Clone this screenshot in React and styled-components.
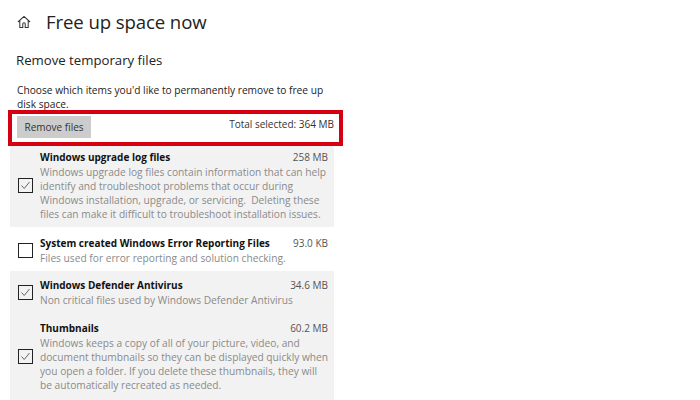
import React from "react";
import styled, { createGlobalStyle } from "styled-components";

const Global = createGlobalStyle`
  html, body { margin: 0; padding: 0; background: #fff; overflow: hidden; }
  body { font-family: "Open Sans", "Noto Sans", "Liberation Sans", sans-serif; color: #1a1a1a; }
`;
const Page = styled.div`
  width: 700px; height: 400px; overflow: hidden; box-sizing: border-box;
  padding: 9px 0 0 10px; display: flex; flex-direction: column;
  & > * { flex: none; }
`;
const Header = styled.header`
  display: flex; align-items: center; gap: 15px; height: 26px; padding-left: 7px;
`;
const Title = styled.h1`
  margin: 0; font-size: 18.6px; font-weight: 400; line-height: 26px; color: #222; letter-spacing: -0.1px;
`;
const Subhead = styled.h2`
  margin: 15px 0 0 6px; font-size: 13.2px; font-weight: 400; line-height: 20px; color: #222;
`;
const Intro = styled.p`
  margin: 13px 0 0 7px; width: 320px; font-size: 10.2px; line-height: 14px; color: #222; height: 28px;
`;
const Highlight = styled.div`
  box-sizing: border-box; width: 335px; height: 36px; margin-left: -2px; margin-top: -1px;
  border: 4px solid #d40012; display: flex; justify-content: space-between; align-items: flex-start;
  padding: 2px 5px 0 5px;
`;
const RemoveButton = styled.button`
  width: 74px; height: 22px; border: 0; background: #cccccc; font: inherit; font-size: 10px; color: #333; padding: 0;
`;
const Total = styled.span`
  font-size: 10px; line-height: 14px; margin-top: 1px; color: #333;
`;
const List = styled.div`
  width: 324px; display: flex; flex-direction: column;
`;
const Row = styled.div`
  display: flex; align-items: center; gap: 7px; padding: ${p => p.$pad};
  background: ${p => (p.$selected ? "#f2f2f2" : "#fff")};
`;
const Box = styled.span`
  flex: none; box-sizing: border-box; width: 15px; height: 15px; border: 1.5px solid #222;
  display: flex; align-items: center; justify-content: center;
`;
const Body = styled.div`
  flex: 1; min-width: 0;
`;
const TitleLine = styled.div`
  display: flex; justify-content: space-between; font-size: 10px; line-height: 14px; color: #555; margin-bottom: 1px; white-space: nowrap;
`;
const Name = styled.strong`
  font-weight: 700; color: #111;
`;
const Desc = styled.div`
  font-size: 10.2px; line-height: 14px; color: #8a8a8a; white-space: pre;
`;
const Home = () => (
  <svg width="14" height="14" viewBox="0 0 15 15" fill="none" stroke="#333" strokeWidth="1.1">
    <path d="M1 7.5 7.5 1.5 14 7.5M3 6v7.5h3.2V9.5a1.3 1.3 0 0 1 2.6 0v4H12V6" />
  </svg>
);
const Check = () => (
  <svg width="11" height="11" viewBox="0 0 11 11" fill="none" stroke="#666" strokeWidth="1">
    <path d="M1.5 5.5 4.2 8.5 9.5 2" />
  </svg>
);
const items = [
  { name: "Windows upgrade log files", size: "258 MB", on: true, pad: "4px 6px 6px 8px", desc: ["Windows upgrade log files contain information that can help", "identify and troubleshoot problems that occur during", "Windows installation, upgrade, or servicing.  Deleting these", "files can make it difficult to troubleshoot installation issues."] },
  { name: "System created Windows Error Reporting Files", size: "93.0 KB", on: false, pad: "9px 6px 6px 8px", desc: ["Files used for error reporting and solution checking."] },
  { name: "Windows Defender Antivirus", size: "34.6 MB", on: true, pad: "7px 6px 7px 8px", desc: ["Non critical files used by Windows Defender Antivirus"] },
  { name: "Thumbnails", size: "60.2 MB", on: true, pad: "7px 6px 8px 8px", desc: ["Windows keeps a copy of all of your picture, video, and", "document thumbnails so they can be displayed quickly when", "you open a folder. If you delete these thumbnails, they will", "be automatically recreated as needed."] },
];
export default function App() {
  return (
    <Page>
      <Global />
      <Header><Home /><Title>Free up space now</Title></Header>
      <Subhead>Remove temporary files</Subhead>
      <Intro>Choose which items you'd like to permanently remove to free up disk space.</Intro>
      <Highlight>
        <RemoveButton>Remove files</RemoveButton>
        <Total>Total selected: 364 MB</Total>
      </Highlight>
      <List>
        {items.map(it => (
          <Row key={it.name} $selected={it.on} $pad={it.pad}>
            <Box>{it.on && <Check />}</Box>
            <Body>
              <TitleLine><Name>{it.name}</Name><span>{it.size}</span></TitleLine>
              {it.desc.map(d => <Desc key={d}>{d}</Desc>)}
            </Body>
          </Row>
        ))}
      </List>
    </Page>
  );
}
